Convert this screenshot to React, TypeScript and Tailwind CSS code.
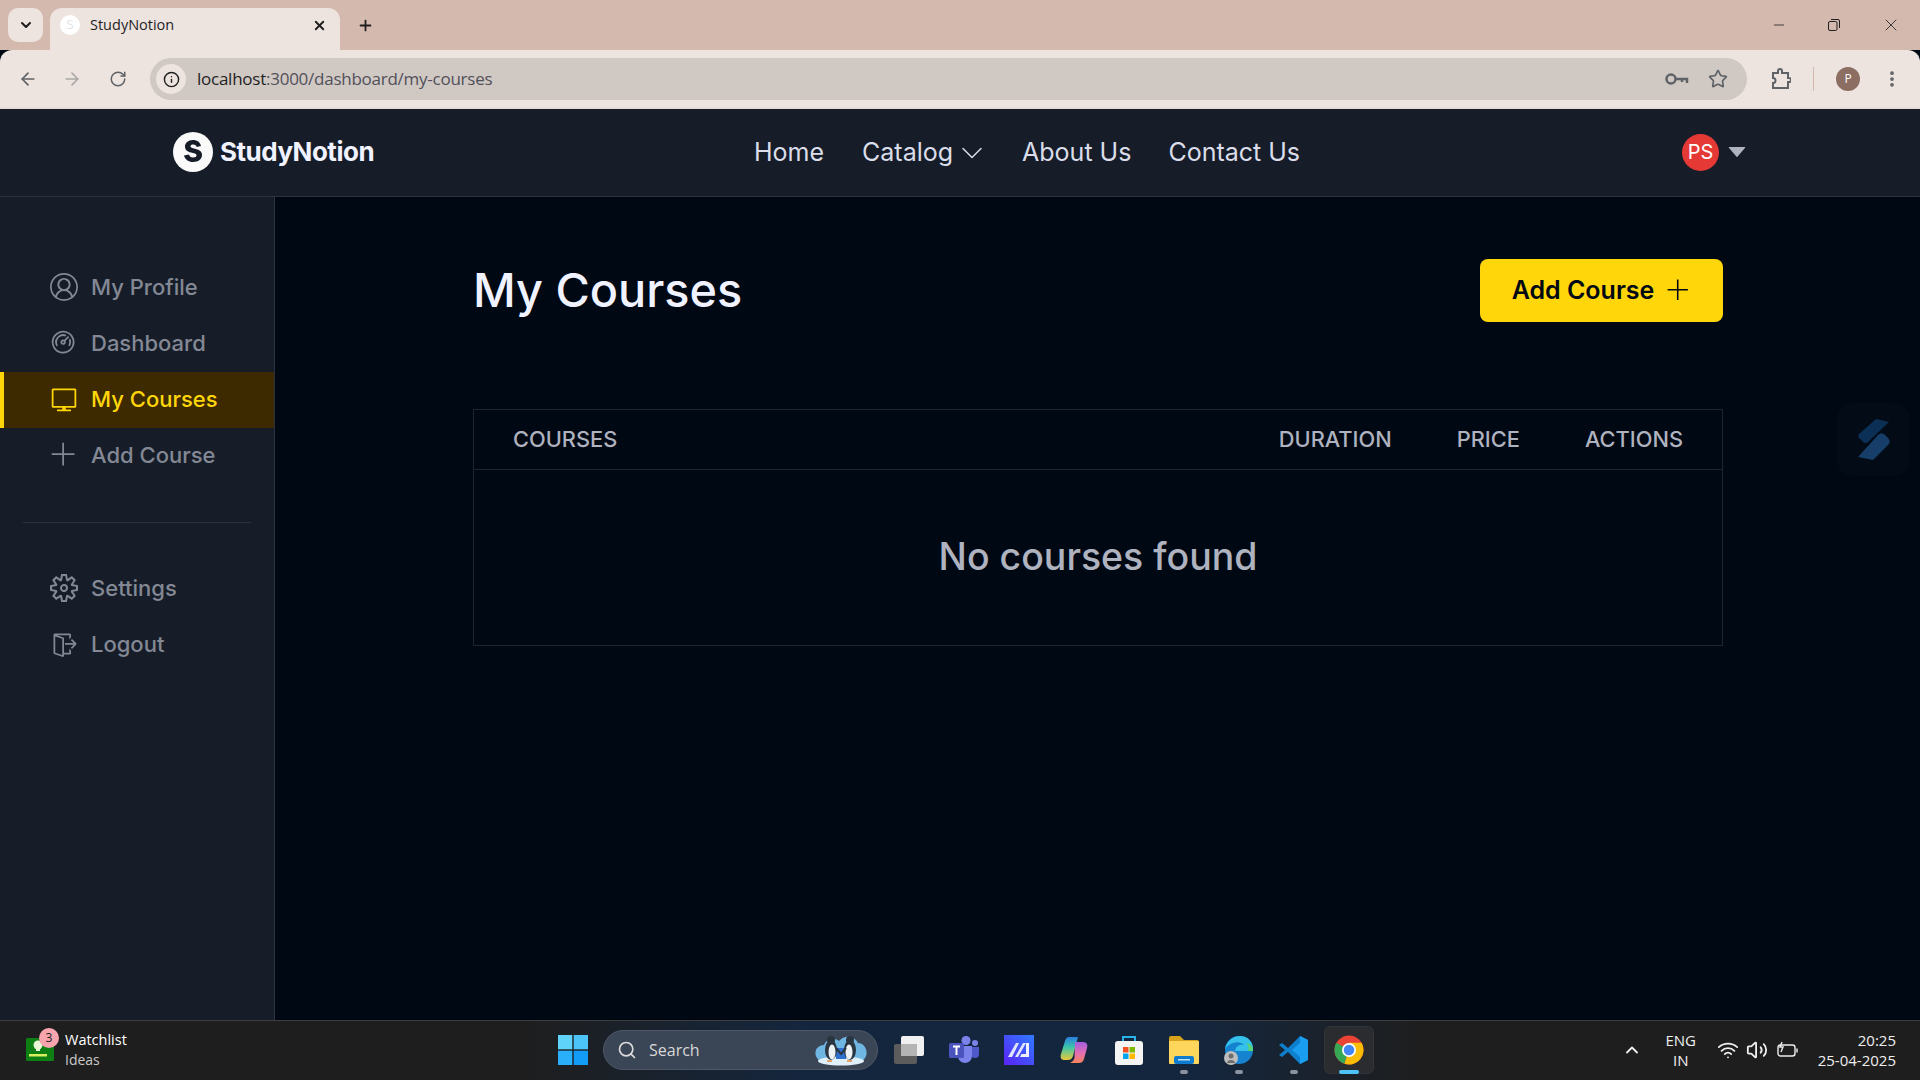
import React from "react";
import { ArrowLeft, ArrowRight, RotateCw, Info, Star, ChevronDown, ChevronUp, X, Plus, Minus, Search, Volume2, Wifi, MoreVertical } from "lucide-react";
import { VscAccount, VscDashboard, VscVm, VscAdd, VscSettingsGear, VscSignOut } from "react-icons/vsc";
import { AiFillCaretDown } from "react-icons/ai";
import { BsChevronDown } from "react-icons/bs";

const sidebarTop = [
  { name: "My Profile", Icon: VscAccount },
  { name: "Dashboard", Icon: VscDashboard },
  { name: "My Courses", Icon: VscVm, active: true },
  { name: "Add Course", Icon: VscAdd },
];

const sidebarBottom = [
  { name: "Settings", Icon: VscSettingsGear },
  { name: "Logout", Icon: VscSignOut },
];

const SidebarLink = ({ name, Icon, active }: { name: string; Icon: React.ElementType; active?: boolean }) => (
  <div
    className={`flex h-14 items-center gap-[13px] pb-[2px] text-[22px] font-medium ${
      active ? "border-l-4 border-[#ffd60a] bg-[#3d2a01] pl-[46px] text-[#ffd60a]" : "pl-[50px] text-[#838894]"
    }`}
  >
    <Icon size={28} />
    <span>{name}</span>
  </div>
);

const Browser = () => (
  <div className="shrink-0 font-['Open_Sans',sans-serif]">
    <div className="flex h-[50px] bg-[#d4b9af] pt-2">
      <div className="ml-2 mr-[7px] flex h-[34px] w-[35px] items-center justify-center rounded-[10px] bg-[#ede3df]">
        <ChevronDown size={16} strokeWidth={3} className="text-[#1f1f1f]" />
      </div>
      <div className="flex h-[42px] w-[290px] items-center rounded-t-xl bg-[#ede3df] pb-2 pl-[10px] pr-[13px]">
        <span className="flex h-5 w-5 items-center justify-center rounded-full bg-white text-[13px] text-[#e4e4e4]">S</span>
        <span className="ml-[10px] flex-1 text-[14.5px] text-[#1f1f1f]">StudyNotion</span>
        <X size={15} strokeWidth={3} className="text-[#1f1f1f]" />
      </div>
      <div className="ml-[17px] flex h-[34px] items-center">
        <Plus size={17} strokeWidth={2.5} className="text-[#1f1f1f]" />
      </div>
      <div className="ml-auto flex h-[34px] items-center gap-[40px] pr-[19px] text-[#1f1f1f]">
        <Minus size={16} strokeWidth={1.2} />
        <svg width="14" height="14" viewBox="0 0 14 14" fill="none" stroke="currentColor">
          <rect x="1.5" y="3.5" width="8.5" height="9" rx="1.5" />
          <path d="M4 1.5h7a1.5 1.5 0 0 1 1.5 1.5v7" />
        </svg>
        <X size={20} strokeWidth={1} />
      </div>
    </div>
    <div className="flex h-[59px] items-start rounded-t-xl border-b-2 border-[#e6dcd8] bg-[#ede3df] pt-2">
      <div className="flex h-[42px] w-[150px] items-center pl-[18px] text-[#5f6368]">
        <ArrowLeft size={20} />
        <ArrowRight size={20} className="ml-[24px] text-[#aaa9a7]" />
        <RotateCw size={18} className="ml-[27px]" />
      </div>
      <div className="flex h-[42px] w-[1597px] items-center rounded-full bg-[#d0c8c3] pl-[6px] pr-[19px]">
        <span className="flex h-[30px] w-[30px] items-center justify-center rounded-full bg-[#ede3df]">
          <Info size={17} className="text-[#1f1f1f]" />
        </span>
        <span className="ml-[11px] flex-1 text-[17px] tracking-[-0.25px] text-[#50505a]">
          <span className="text-[#1f1f1f]">localhost</span>:3000/dashboard/my-courses
        </span>
        <svg width="24" height="14" viewBox="0 0 24 14" fill="none" stroke="#5f6368" strokeWidth="2.5" className="mr-[19px]">
          <circle cx="6" cy="7" r="4.5" />
          <path d="M10.500 7H22v4M17 7v3" />
        </svg>
        <Star size={20} strokeWidth={2} className="text-[#5f6368]" />
      </div>
      <div className="flex h-[42px] flex-1 items-center pl-[24px] text-[#5f6368]">
        <svg width="20" height="22" viewBox="0 0 20 22" fill="none" stroke="currentColor" strokeWidth="2">
          <path d="M2 5h5V3a2 2 0 0 1 4 0v2h6v5h1a2 2 0 0 1 0 4h-1v6H2v-5a2.500 2.500 0 0 0 0-5z" />
        </svg>
        <span className="ml-[22px] h-6 w-px bg-[#d4b9af]" />
        <span className="ml-[22px] flex h-6 w-6 items-center justify-center rounded-full bg-[#8d6e63] text-[12px] text-white">P</span>
        <MoreVertical size={20} strokeWidth={2.5} className="ml-[22px]" />
      </div>
    </div>
  </div>
);

const Pip = () => <span className="absolute bottom-0 h-1 w-2 rounded-full bg-[#8b93a0]" />;

const Taskbar = () => (
  <div className="flex h-[60px] shrink-0 items-center border-t border-[#3d3d3d] bg-[linear-gradient(90deg,#1e1e1e_0%,#1e1e1e_27%,#14263e_42%,#14263e_62%,#1e1e1e_74%,#1e1e1e_100%)] pb-[2px] font-['Open_Sans',sans-serif] text-white">
    <div className="flex w-[558px] items-center pl-[26px]">
      <div className="relative h-[23px] w-[28px]">
        <svg width="28" height="23" viewBox="0 0 28 23">
          <rect width="28" height="23" rx="1.500" fill="#0e7f12" />
          <circle cx="12" cy="7" r="4.500" fill="#eaf6d8" />
          <rect x="10" y="10" width="4" height="3" fill="#eaf6d8" />
          <rect x="3" y="16" width="18" height="2.500" fill="#d6f060" />
        </svg>
        <span className="absolute left-[13px] top-[-10px] flex h-5 w-5 items-center justify-center rounded-full bg-[#f8a5ae] text-[12px] text-[#1a1a1a]">3</span>
      </div>
      <div className="ml-[11px] text-[14.5px] leading-[20px]">
        <div className="font-medium">Watchlist</div>
        <div className="text-[14px] text-[#c9c9c9]">Ideas</div>
      </div>
    </div>
    <svg width="30" height="30" viewBox="0 0 30 30" className="shrink-0">
      <rect width="14.300" height="14.300" fill="#5fd3fa" />
      <rect x="15.700" width="14.300" height="14.300" fill="#4cc4f7" />
      <rect y="15.700" width="14.300" height="14.300" fill="#2ab0fb" />
      <rect x="15.700" y="15.700" width="14.300" height="14.300" fill="#129cf8" />
    </svg>
    <div className="ml-[15px] flex h-10 w-[275px] shrink-0 items-center rounded-full border border-[#4d5767] bg-[#3a4555] pl-[13px]">
      <Search size={20} className="text-[#dcdcdc]" />
      <span className="ml-[12px] flex-1 text-[16px] text-[#d8d8d8]">Search</span>
      <svg width="54" height="32" viewBox="0 0 54 32" className="mr-[9px]">
        <path d="M3 24c-4-6 0-13 7-13 3-7 10-8 15-4 5-6 15-6 19 2 7 0 11 9 7 15-2 4-8 5-24 5S5 28 3 24z" fill="#6fb6e2" />
        <ellipse cx="27" cy="27" rx="23" ry="4.500" fill="#dff0fa" />
        <rect x="22" y="14" width="10" height="11" fill="#2f6fd0" />
        <ellipse cx="17" cy="16" rx="6" ry="10" fill="#2a3540" />
        <circle cx="17" cy="6" r="4" fill="#2a3540" />
        <ellipse cx="18" cy="18" rx="3.500" ry="7.500" fill="#eef2f5" />
        <ellipse cx="36" cy="16" rx="6" ry="10" fill="#2a3540" />
        <circle cx="36" cy="6" r="4" fill="#2a3540" />
        <ellipse cx="35" cy="18" rx="3.500" ry="7.500" fill="#eef2f5" />
        <path d="M22 14l5 6 5-6" fill="none" stroke="#2a3540" strokeWidth="2" />
        <path d="M13 27h5M33 27h5" stroke="#e58a3c" strokeWidth="1.500" />
      </svg>
    </div>
    <div className="ml-[3px] flex shrink-0 items-center">
      <div className="flex h-12 w-[55px] items-center justify-center">
        <svg width="30" height="28" viewBox="0 0 30 28">
          <rect y="8" width="23" height="20" rx="2" fill="#5c5c5c" />
          <rect x="7" width="23" height="20" rx="2" fill="#f0f0f0" />
          <rect x="7" y="8" width="16" height="12" fill="#b4b4b4" />
        </svg>
      </div>
      <div className="flex h-12 w-[55px] items-center justify-center">
        <svg width="30" height="27" viewBox="0 0 30 27">
          <circle cx="26" cy="7" r="3" fill="#7b83eb" />
          <path d="M21 11h9v7a4 4 0 0 1-8 0z" fill="#5059c9" />
          <circle cx="17" cy="4.500" r="4.500" fill="#7b83eb" />
          <path d="M9 10h14v10a7 7 0 0 1-14 0z" fill="#7b83eb" />
          <rect y="7" width="15" height="15" rx="1.500" fill="#4b53bc" />
          <path d="M4 10.500h7M7.500 10.500V19" stroke="#fff" strokeWidth="2" />
        </svg>
      </div>
      <div className="flex h-12 w-[55px] items-center justify-center">
        <svg width="30" height="30" viewBox="0 0 30 30">
          <defs>
            <linearGradient id="mGrad" x1="1" y1="0" x2="0" y2="1">
              <stop offset="0" stopColor="#2f7bff" />
              <stop offset="1" stopColor="#5a22f5" />
            </linearGradient>
          </defs>
          <rect width="30" height="30" fill="url(#mGrad)" />
          <path d="M4 22 12 8h3L8 22zM11 22 19 8h3l-8 14z" fill="#dfe4ff" />
          <path d="M22 8h3v14h-9l1.500-3H22z" fill="#eef0ff" />
        </svg>
      </div>
      <div className="flex h-12 w-[55px] items-center justify-center">
        <svg width="28" height="26" viewBox="0 0 28 26">
          <defs>
            <linearGradient id="copA" x1="0" y1="0" x2="0" y2="1">
              <stop offset="0" stopColor="#2a7fe0" />
              <stop offset="0.450" stopColor="#3dc6a8" />
              <stop offset="1" stopColor="#e8c93a" />
            </linearGradient>
            <linearGradient id="copB" x1="0" y1="0" x2="0" y2="1">
              <stop offset="0" stopColor="#a35fe0" />
              <stop offset="0.550" stopColor="#e56fb0" />
              <stop offset="1" stopColor="#f5845a" />
            </linearGradient>
          </defs>
          <path d="M9 0h9l-5 19c-1 3-3 4-5 4H4c-3 0-4-3-3-6L5 4c1-3 2-4 4-4z" fill="url(#copA)" />
          <path d="M15 5h8c4 0 5 3 4 6l-3 11c-1 3-3 4-5 4h-9c2-1 4-3 4.500-5z" fill="url(#copB)" />
        </svg>
      </div>
      <div className="flex h-12 w-[55px] items-center justify-center">
        <svg width="30" height="30" viewBox="0 0 30 30">
          <path d="M9 7V2h12v5" fill="none" stroke="#28b4e8" strokeWidth="2" />
          <rect x="1" y="6" width="28" height="24" rx="3" fill="#f4f4f4" />
          <rect x="9" y="12" width="5.500" height="5.500" fill="#f25022" />
          <rect x="15.500" y="12" width="5.500" height="5.500" fill="#7fba00" />
          <rect x="9" y="18.500" width="5.500" height="5.500" fill="#00a4ef" />
          <rect x="15.500" y="18.500" width="5.500" height="5.500" fill="#ffb900" />
        </svg>
      </div>
      <div className="relative flex h-12 w-[55px] items-center justify-center">
        <svg width="30" height="28" viewBox="0 0 30 28">
          <path d="M0 2a2 2 0 0 1 2-2h9l4 4h13a2 2 0 0 1 2 2v4H0z" fill="#d9a21b" />
          <rect y="5" width="30" height="23" rx="1" fill="#ffd65c" />
          <rect x="5" y="20" width="20" height="8" rx="2" fill="#0f7cd0" />
          <rect x="9" y="23" width="12" height="1.500" fill="#bfe0f7" />
        </svg>
        <Pip />
      </div>
      <div className="relative flex h-12 w-[55px] items-center justify-center">
        <svg width="30" height="30" viewBox="0 0 30 30">
          <circle cx="15" cy="15" r="14" fill="#1583cf" />
          <path d="M1 14C3 5 10 1 16 1c8 0 14 6 13 15H11c1-6 6-7 9-6-3-4-13-4-19 4z" fill="#35c1e9" />
          <path d="M29 16c0-5-3-8-7-8 3 2 3 5 2 8z" fill="#58d36e" />
          <circle cx="7" cy="23" r="7" fill="#bdbdbd" />
          <circle cx="7" cy="21" r="2.500" fill="#6e6e6e" />
          <path d="M3 28c0-4 8-4 8 0z" fill="#6e6e6e" />
        </svg>
        <Pip />
      </div>
      <div className="relative flex h-12 w-[55px] items-center justify-center">
        <svg width="30" height="30" viewBox="0 0 30 30">
          <path d="M21 1 29 5v20l-8 4L9 17l-6 5-3-2 6-5-6-5 3-2 6 5z" fill="#0e7fcc" />
          <path d="M21 1 29 5v20l-8 4zM21 8l-8 7 8 7z" fill="#1a9ff0" fillRule="evenodd" />
        </svg>
        <Pip />
      </div>
      <div className="flex h-12 w-[55px] items-center justify-center">
        <div className="relative flex h-12 w-[50px] items-center justify-center rounded-md border border-[#303338] bg-[#2a2c30]">
          <svg width="30" height="30" viewBox="0 0 30 30">
            <circle cx="15" cy="15" r="14.500" fill="#ea4335" />
            <path d="M15 15 2.400 7.800A14.500 14.500 0 0 0 10.500 28.800z" fill="#34a853" />
            <path d="M15 15 10.500 28.800A14.500 14.500 0 0 0 27.600 7.800H15z" fill="#fbbc04" />
            <circle cx="15" cy="15" r="7" fill="#fff" />
            <circle cx="15" cy="15" r="5.300" fill="#4285f4" />
          </svg>
          <span className="absolute bottom-[-1px] h-1 w-5 rounded-full bg-[#4fc3f7]" />
        </div>
      </div>
    </div>
    <div className="ml-auto flex items-center pr-[24px] text-[#eeeeee]">
      <ChevronUp size={20} strokeWidth={2.2} />
      <div className="ml-[22px] w-[34px] text-center text-[15px] leading-[20px]">
        ENG
        <br />
        IN
      </div>
      <Wifi size={22} className="ml-[19px]" />
      <Volume2 size={22} className="ml-[7px]" />
      <svg width="22" height="18" viewBox="0 0 22 18" fill="none" stroke="currentColor" strokeWidth="1.400" className="ml-[9px]">
        <rect x="1" y="4" width="17" height="11" rx="2.500" />
        <path d="M20 7.500v4M5 1 3 6h3l-2 5" />
      </svg>
      <div className="ml-[19px] text-right text-[15px] leading-[20px]">
        20:25
        <br />
        25-04-2025
      </div>
    </div>
  </div>
);

export default function App() {
  return (
    <div className="flex h-screen w-full flex-col overflow-hidden bg-[#000814] font-['Inter',sans-serif]">
      <Browser />
      <nav className="flex h-[88px] shrink-0 items-center border-b border-[#2c333f] bg-[#161d29] pb-px pl-[173px] pr-[171px]">
        <div className="flex w-[581px] items-center gap-[7px]">
          <svg width="40" height="40" viewBox="0 0 40 40">
            <circle cx="20" cy="20" r="20" fill="#fafafa" />
            <path d="M28 14c-1-4-4-6-8-6-5 0-8 3-8 6.500 0 4 3 5.500 8 6.500 3 .6 3.500 1.500 3.500 2.500s-1.200 2-3.500 2-3.500-1-4-3l-5 1c1 4 4.500 6.500 9 6.500 5.500 0 9-2.800 9-7 0-4-3-5.500-8-6.500-2.800-.6-3.500-1.300-3.500-2.300s1-1.700 2.800-1.700c1.900 0 3 .9 3.400 2.500z" fill="#161d29" />
          </svg>
          <span className="mb-[2px] text-[26px] font-bold tracking-[-0.5px] text-[#f1f2ff]">StudyNotion</span>
        </div>
        <div className="mt-[2px] flex items-center gap-[38px] text-[25px] text-[#dbddea]">
          <span>Home</span>
          <span className="flex items-center gap-[7px]">
            Catalog
            <BsChevronDown size={24} />
          </span>
          <span>About Us</span>
          <span className="-ml-px">Contact Us</span>
        </div>
        <div className="ml-auto flex items-center gap-[6px]">
          <span className="flex h-[37px] w-[37px] items-center justify-center rounded-full bg-[#e53935] text-[20px] text-white">PS</span>
          <AiFillCaretDown size={24} className="text-[#afb2bf]" />
        </div>
      </nav>
      <div className="relative flex min-h-0 flex-1">
        <aside className="flex w-[275px] shrink-0 flex-col border-r border-[#2c333f] bg-[#161d29] pt-[63px]">
          <div>
            {sidebarTop.map((link) => (
              <SidebarLink key={link.name} {...link} />
            ))}
          </div>
          <div className="mx-[23px] mb-[38px] mt-[38px] h-px bg-[#2c333f]" />
          <div>
            {sidebarBottom.map((link) => (
              <SidebarLink key={link.name} {...link} />
            ))}
          </div>
        </aside>
        <main className="flex-1 pl-[198px] pr-[197px] pt-[62px]">
          <div className="flex items-center justify-between">
            <h1 className="text-[46.8px] font-medium leading-[63px] text-[#f1f2ff]">My Courses</h1>
            <button className="flex h-[63px] w-[243px] items-center justify-center gap-[12px] rounded-lg bg-[#ffd60a] text-[25px] font-semibold text-[#000814]">
              Add Course
              <VscAdd size={25} />
            </button>
          </div>
          <div className="mt-[87px] border border-[#1f2530]">
            <div className="flex h-[60px] items-center border-b border-[#1f2530] pl-[39px] pr-[39px] text-[21.8px] font-medium text-[#afb2bf]">
              <span className="flex-1">COURSES</span>
              <span>DURATION</span>
              <span className="ml-[65px]">PRICE</span>
              <span className="ml-[65px]">ACTIONS</span>
            </div>
            <div className="flex h-[175px] items-center justify-center text-[37.5px] font-medium text-[#afb2bf]">
              No courses found
            </div>
          </div>
        </main>
        <div className="absolute right-[10px] top-[206px] flex h-[73px] w-[73px] items-center justify-center rounded-2xl bg-[#030b16]">
          <svg width="32" height="42" viewBox="0 0 32 42">
            <path d="M18 0 31 3 10 23c-2 2-4 1-6-1l-3-3c-1-1-1-3 0-4z" fill="#0c2f56" />
            <path d="M20 16c2-2 5-2 7 0l3 3c2 2 2 4 1 6L15 41 0 38z" fill="#163e69" />
          </svg>
        </div>
      </div>
      <Taskbar />
    </div>
  );
}
